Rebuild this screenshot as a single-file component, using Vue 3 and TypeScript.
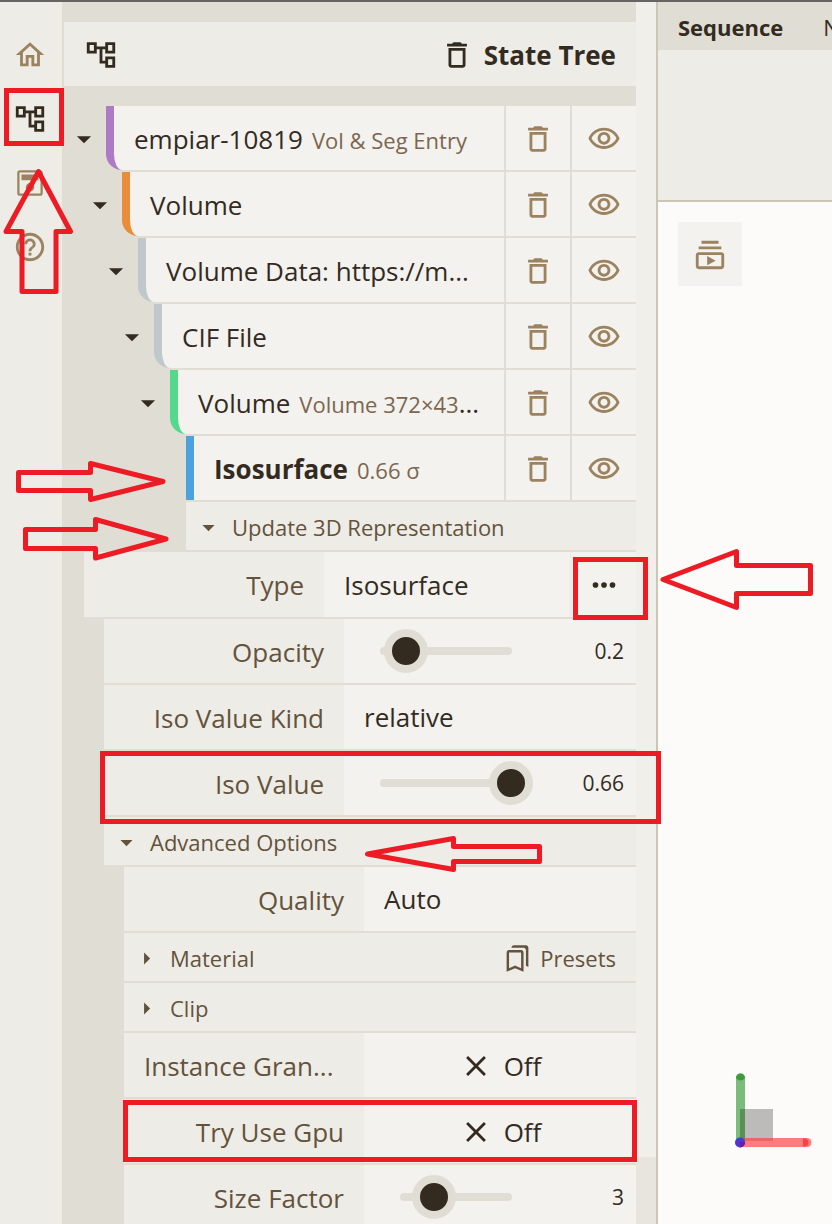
<script setup lang="ts">
import { ref } from 'vue'

interface TreeNode {
  label: string
  note?: string
  more?: boolean
  tone: string
  current?: boolean
}

const icons = {
  home: 'M12 5.69l5 4.5V18h-2v-6H9v6H7v-7.81l5-4.5M12 3L2 12h3v8h6v-6h2v6h6v-8h3L12 3z',
  tree: 'M22 11V3h-7v3H9V3H2v8h7V8h2v10h4v3h7v-8h-7v3h-2V8h2v3h7zM7 9H4V5h3v4zm10 6h3v4h-3v-4zm0-10h3v4h-3V5z',
  save: 'M5 3h14a2 2 0 0 1 2 2v14a2 2 0 0 1-2 2H5a2 2 0 0 1-2-2V5a2 2 0 0 1 2-2zM4.600 4.600v14.800h14.800V4.600zM6 6h12v4H6zM12 12a3 3 0 1 1 0 6 3 3 0 0 1 0-6z',
  help: 'M11 18h2v-2h-2v2zm1-16C6.48 2 2 6.48 2 12s4.48 10 10 10 10-4.48 10-10S17.52 2 12 2zm0 18c-4.41 0-8-3.59-8-8s3.59-8 8-8 8 3.59 8 8-3.59 8-8 8zm0-14c-2.21 0-4 1.79-4 4h2c0-1.1.9-2 2-2s2 .9 2 2c0 2-3 1.75-3 5h2c0-2.25 3-2.5 3-5 0-2.21-1.79-4-4-4z',
  trash: 'M6 19c0 1.1.9 2 2 2h8c1.1 0 2-.9 2-2V7H6v12zM8 9h8v10H8V9zm7.5-5l-1-1h-5l-1 1H5v2h14V4z',
  eye: 'M12 6c3.79 0 7.17 2.13 8.82 5.5C19.17 14.87 15.79 17 12 17s-7.17-2.13-8.82-5.5C4.83 8.13 8.21 6 12 6m0-2C7 4 2.73 7.11 1 11.5 2.73 15.89 7 19 12 19s9.27-3.11 11-7.5C21.27 7.11 17 4 12 4zm0 5c1.38 0 2.5 1.12 2.5 2.5S13.38 14 12 14s-2.5-1.12-2.5-2.5S10.62 9 12 9m0-2c-2.48 0-4.5 2.02-4.5 4.5S9.52 16 12 16s4.5-2.02 4.5-4.5S14.48 7 12 7z',
  down: 'M7 10l5 5 5-5z',
  right: 'M10 17l5-5-5-5z',
  close: 'M19 6.41L17.59 5 12 10.59 6.41 5 5 6.41 10.59 12 5 17.59 6.41 19 12 13.41 17.59 19 19 17.59 13.41 12z',
  dots: 'M6 10a2 2 0 1 0 0 4 2 2 0 0 0 0-4zm6 0a2 2 0 1 0 0 4 2 2 0 0 0 0-4zm6 0a2 2 0 1 0 0 4 2 2 0 0 0 0-4z',
  presets: 'M15 7v12.97l-4.21-1.81-.79-.34-.79.34L5 19.97V7h10m4-6H8.99C7.89 1 7 1.9 7 3h10c1.1 0 2 .9 2 2v13l2 1V3c0-1.1-.9-2-2-2zm-4 4H5c-1.1 0-2 .9-2 2v16l7-3 7 3V7c0-1.1-.9-2-2-2z',
  movie: 'M4 6h16v2H4zm2-4h12v2H6zm14 8H4c-1.1 0-2 .9-2 2v8c0 1.1.9 2 2 2h16c1.1 0 2-.9 2-2v-8c0-1.1-.9-2-2-2zm0 10H4v-8h16v8zm-10-7.27v6.53L16 16z',
}

const nodes: TreeNode[] = [
  { label: 'empiar-10819', note: 'Vol & Seg Entry', tone: 'purple' },
  { label: 'Volume', tone: 'orange' },
  { label: 'Volume Data: https://m...', tone: 'grey' },
  { label: 'CIF File', tone: 'grey' },
  { label: 'Volume', note: 'Volume 372×43', more: true, tone: 'green' },
  { label: 'Isosurface', note: '0.66 σ', tone: 'blue', current: true },
]

const opacity = ref(20)
const isoValue = ref(99)
const sizeFactor = ref(30)
</script>

<template>
  <div class="app">
    <nav class="rail" aria-label="Panels">
      <button type="button" aria-label="Home"><svg class="icon" viewBox="0 0 24 24"><path :d="icons.home" /></svg></button>
      <button type="button" class="active" aria-label="State tree"><svg class="icon" viewBox="0 0 24 24"><path :d="icons.tree" /></svg></button>
      <button type="button" aria-label="Save"><svg class="icon" viewBox="0 0 24 24"><path fill-rule="evenodd" :d="icons.save" /></svg></button>
      <button type="button" aria-label="Help"><svg class="icon" viewBox="0 0 24 24"><path :d="icons.help" /></svg></button>
    </nav>

    <section class="panel">
      <header class="head">
        <svg class="icon" viewBox="0 0 24 24"><path :d="icons.tree" /></svg>
        <button type="button" class="clear" aria-label="Remove all"><svg class="icon" viewBox="0 0 24 24"><path :d="icons.trash" /></svg></button>
        <h1>State Tree</h1>
      </header>

      <div class="tree">
        <div v-for="(node, i) in nodes" :key="i" class="branch" :style="{ paddingLeft: i * 16 + 'px' }">
          <button v-if="!node.current" type="button" class="toggle" aria-label="Collapse"><svg class="icon" viewBox="0 0 24 24"><path :d="icons.down" /></svg></button>
          <span v-else class="toggle"></span>
          <button type="button" class="node" :class="[node.tone, { current: node.current }]">
            <span>{{ node.label }}</span><small v-if="node.note">{{ node.note }}</small><span v-if="node.more">...</span>
          </button>
          <button type="button" class="square" aria-label="Remove"><svg class="icon" viewBox="0 0 24 24"><path :d="icons.trash" /></svg></button>
          <button type="button" class="square" aria-label="Toggle visibility"><svg class="icon" viewBox="0 0 24 24"><path :d="icons.eye" /></svg></button>
        </div>
      </div>

      <button type="button" class="group update">
        <svg class="icon small" viewBox="0 0 24 24"><path :d="icons.down" /></svg><span>Update 3D Representation</span>
      </button>

      <div class="params">
        <div class="row">
          <label for="type">Type</label>
          <select id="type" class="field"><option>Isosurface</option></select>
          <button type="button" class="square dark" aria-label="Type options"><svg class="icon" viewBox="0 0 24 24"><path :d="icons.dots" /></svg></button>
        </div>
        <div class="nested">
          <div class="row">
            <label for="opacity">Opacity</label>
            <div class="field slide">
              <span class="track"><input id="opacity" v-model="opacity" type="range" min="0" max="100" /></span>
              <input class="value" type="text" value="0.2" aria-label="Opacity value" />
            </div>
          </div>
          <div class="row">
            <label for="kind">Iso Value Kind</label>
            <select id="kind" class="field"><option>relative</option></select>
          </div>
          <div class="row">
            <label for="iso">Iso Value</label>
            <div class="field slide">
              <span class="track"><input id="iso" v-model="isoValue" type="range" min="0" max="100" /></span>
              <input class="value" type="text" value="0.66" aria-label="Iso value number" />
            </div>
          </div>
          <button type="button" class="group">
            <svg class="icon small" viewBox="0 0 24 24"><path :d="icons.down" /></svg><span>Advanced Options</span>
          </button>
          <div class="nested">
            <div class="row">
              <label for="quality">Quality</label>
              <select id="quality" class="field"><option>Auto</option></select>
            </div>
            <div class="pair">
              <button type="button" class="group">
                <svg class="icon small" viewBox="0 0 24 24"><path :d="icons.right" /></svg><span>Material</span>
              </button>
              <button type="button" class="presets">
                <svg class="icon small" viewBox="0 0 24 24"><path :d="icons.presets" /></svg><span>Presets</span>
              </button>
            </div>
            <button type="button" class="group">
              <svg class="icon small" viewBox="0 0 24 24"><path :d="icons.right" /></svg><span>Clip</span>
            </button>
            <div class="row">
              <label for="instance" class="long">Instance Gran...</label>
              <button id="instance" type="button" class="field switch"><svg class="icon" viewBox="0 0 24 24"><path :d="icons.close" /></svg><span>Off</span></button>
            </div>
            <div class="row">
              <label for="gpu">Try Use Gpu</label>
              <button id="gpu" type="button" class="field switch"><svg class="icon" viewBox="0 0 24 24"><path :d="icons.close" /></svg><span>Off</span></button>
            </div>
            <div class="row">
              <label for="size">Size Factor</label>
              <div class="field slide">
                <span class="track"><input id="size" v-model="sizeFactor" type="range" min="0" max="100" /></span>
                <input class="value" type="text" value="3" aria-label="Size factor value" />
              </div>
            </div>
          </div>
        </div>
      </div>
    </section>

    <div class="scroll"><div class="thumb"></div></div>

    <main class="stage">
      <div class="sequence"><strong>Sequence</strong><span>N</span></div>
      <div class="sequence-body"></div>
      <div class="viewport">
        <button type="button" class="movie" aria-label="Animate"><svg class="icon" viewBox="0 0 24 24"><path :d="icons.movie" /></svg></button>
        <svg class="axes" viewBox="0 0 80 80" aria-hidden="true">
          <path d="M6 37h33v32H6z" fill="#bcbbb9" />
          <path d="M2 6a4.500 4.500 0 0 1 9 0v65H2z" fill="#3f9e3f" fill-opacity=".68" />
          <path d="M6 66h67a4.500 4.500 0 0 1 0 9H6z" fill="#ff4040" fill-opacity=".68" />
          <path d="M6 37h5v32H6z" fill="#4c7a4c" fill-opacity=".5" />
          <path d="M2 6a4.500 4.500 0 0 1 9 0q-4.500 5-9 0z" fill="#3a9c3a" />
          <path d="M69 66.500h3a4.500 4.500 0 0 1 0 8h-3z" fill="#ff4040" />
          <circle cx="6" cy="70.500" r="5" fill="#3d3dd8" />
          <path d="M6 70h5a5 5 0 0 1-5 5.500z" fill="#6a1f9c" />
        </svg>
      </div>
    </main>

    <svg class="marks" viewBox="0 0 832 1224" width="832" height="1224" aria-hidden="true">
      <rect x="6.500" y="90.500" width="55" height="53" />
      <rect x="575.500" y="559.500" width="70" height="58" />
      <rect x="102.500" y="753.500" width="556" height="68" />
      <rect x="125.500" y="1102.500" width="509" height="57" />
      <path d="M38.500 171.500L70.500 231.500H56V291.500H22V231.500H6z" />
      <path d="M18.500 472.500H90.500V463.500L163 481.500L90.500 499.500V490.500H18.500z" />
      <path d="M25.500 529.500H95.500V519.500L166 539L95.500 558V548.500H25.500z" />
      <path d="M663 579.500L736.500 551.500V565.500H810.500V593.500H736.500V607.500z" />
      <path d="M367.500 854L453.500 838.500V846.500H539.500V861.500H453.500V869.500z" />
    </svg>
  </div>
</template>

<style>
body {
  background: #fcfbf9;
}
</style>

<style scoped>
* {
  box-sizing: border-box;
}
.app {
  position: relative;
  display: flex;
  height: 100vh;
  overflow: hidden;
  border-top: 2px solid #666564;
  background: #eeece7;
  color: #332b1f;
  font-family: "Open Sans", "Noto Sans", sans-serif;
  font-size: 26px;
  line-height: 36px;
}
button,
input,
select {
  margin: 0;
  padding: 0;
  border: 0;
  border-radius: 0;
  background: none;
  color: inherit;
  font: inherit;
  text-align: left;
}
.icon {
  display: block;
  flex: none;
  width: 34px;
  height: 34px;
  fill: currentColor;
}
.icon.small {
  width: 29px;
  height: 29px;
}
.rail {
  flex: none;
  width: 62px;
  padding-top: 20px;
  color: #9c835f;
}
.rail button {
  display: grid;
  width: 100%;
  height: 64px;
  padding: 2px 2px 0 0;
  place-items: center;
}
.rail .active {
  color: #332b1f;
}
.panel {
  flex: none;
  width: 574px;
  padding: 20px 0 0 2px;
  background: #e0ddd4;
}
.head {
  display: flex;
  align-items: center;
  height: 64px;
  margin-bottom: 20px;
  padding: 2px 20px 0;
  background: #eeece7;
}
.clear {
  margin: 0 10px 0 auto;
}
h1 {
  margin: 0;
  font-size: 26px;
  font-weight: 700;
}
.tree {
  display: flex;
  flex-direction: column;
  gap: 2px;
  margin-bottom: 2px;
}
.branch {
  display: flex;
  gap: 2px;
  height: 64px;
}
.toggle {
  display: flex;
  flex: none;
  align-items: center;
  width: 40px;
  padding: 2px 0 0 3px;
}
.node {
  flex: 1;
  min-width: 0;
  overflow: hidden;
  padding: 2px 20px 0;
  border-left: 8px solid;
  border-bottom-left-radius: 16px;
  background: #f3f2ee;
  white-space: nowrap;
}
.node span {
  color: #332b1f;
}
.node small {
  margin-left: 9px;
  color: #7b6650;
  font-size: 22px;
}
.current {
  border-radius: 0;
}
.current span {
  font-weight: 700;
}
.purple { border-color: #af7ac5; }
.orange { border-color: #eb8c3a; }
.grey { border-color: #bfc8ca; }
.green { border-color: #54d98c; }
.blue { border-color: #4aa3df; }
.square {
  display: grid;
  flex: none;
  width: 64px;
  padding-top: 2px;
  background: #f3f2ee;
  color: #9c835f;
  place-items: center;
}
.square.dark {
  width: 66px;
  padding-top: 0;
  border-left: 2px solid #eeece7;
  color: #332b1f;
}
.group {
  display: flex;
  align-items: center;
  width: 100%;
  height: 48px;
  padding: 2px 0 0 8px;
  background: #eeece7;
  color: #63533c;
  font-size: 22px;
}
.group span {
  margin-left: 9px;
}
.update {
  width: auto;
  min-width: 450px;
  margin: 0 0 2px 122px;
}
.params {
  display: flex;
  flex-direction: column;
  gap: 2px;
  margin-left: 20px;
}
.nested {
  display: flex;
  flex-direction: column;
  gap: 2px;
  margin-left: 20px;
}
.row {
  display: flex;
  height: 64px;
}
.params > .row {
  height: 65px;
}
.row label {
  flex: none;
  width: 240px;
  padding: 0 20px;
  overflow: hidden;
  background: #eeece7;
  color: #63533c;
  line-height: 66px;
  text-align: right;
  white-space: nowrap;
}
.row .long {
  text-align: left;
}
.field {
  flex: 1;
  min-width: 0;
  background: #f3f2ee;
}
select.field {
  padding: 0 20px;
  appearance: none;
}
.slide {
  display: flex;
  align-items: center;
  padding: 0 12px 0 14px;
}
.track {
  position: relative;
  display: flex;
  flex: 1;
  min-width: 0;
}
.track::before {
  position: absolute;
  inset: 18px 22px;
  border-radius: 4px;
  background: #e0ddd4;
  content: "";
}
.track input {
  position: relative;
  width: 100%;
  height: 44px;
  appearance: none;
}
.track input::-webkit-slider-thumb {
  width: 44px;
  height: 44px;
  border: 8px solid #e0ddd4;
  border-radius: 50%;
  background: #332b1f;
  appearance: none;
}
.value {
  width: 90px;
  font-size: 21px;
  text-align: right;
}
.pair {
  display: flex;
  background: #eeece7;
}
.pair .group {
  flex: 1;
}
.presets {
  display: flex;
  align-items: center;
  gap: 8px;
  padding: 2px 20px 0;
  color: #63533c;
  font-size: 22px;
}
.switch {
  display: flex;
  align-items: center;
  justify-content: center;
  gap: 11px;
  padding-top: 2px;
}
.scroll {
  flex: none;
  width: 20px;
  background: #e8e5de;
}
.thumb {
  height: 1155px;
  background: #f0efea;
}
.stage {
  display: flex;
  flex: 1;
  flex-direction: column;
  min-width: 0;
  border-left: 2px solid #cdc6b5;
}
.sequence {
  display: flex;
  flex: none;
  gap: 40px;
  height: 48px;
  padding: 0 20px;
  overflow: hidden;
  background: #e0ddd4;
  font-size: 22px;
  line-height: 50px;
  white-space: nowrap;
}
.sequence-body {
  flex: none;
  height: 152px;
  border-bottom: 2px solid #cdc6b5;
}
.viewport {
  position: relative;
  flex: 1;
  padding: 20px;
  background: #fcfbf9;
}
.movie {
  display: grid;
  width: 64px;
  height: 64px;
  padding-top: 2px;
  background: #f3f2ee;
  color: #9c835f;
  place-items: center;
}
.axes {
  position: absolute;
  bottom: 72px;
  left: 76px;
  width: 80px;
  height: 80px;
}
.marks {
  position: absolute;
  top: -2px;
  left: 0;
  fill: none;
  pointer-events: none;
  stroke: #ed1c24;
  stroke-linejoin: round;
  stroke-width: 5px;
}
.marks rect {
  stroke-linejoin: miter;
}
</style>
